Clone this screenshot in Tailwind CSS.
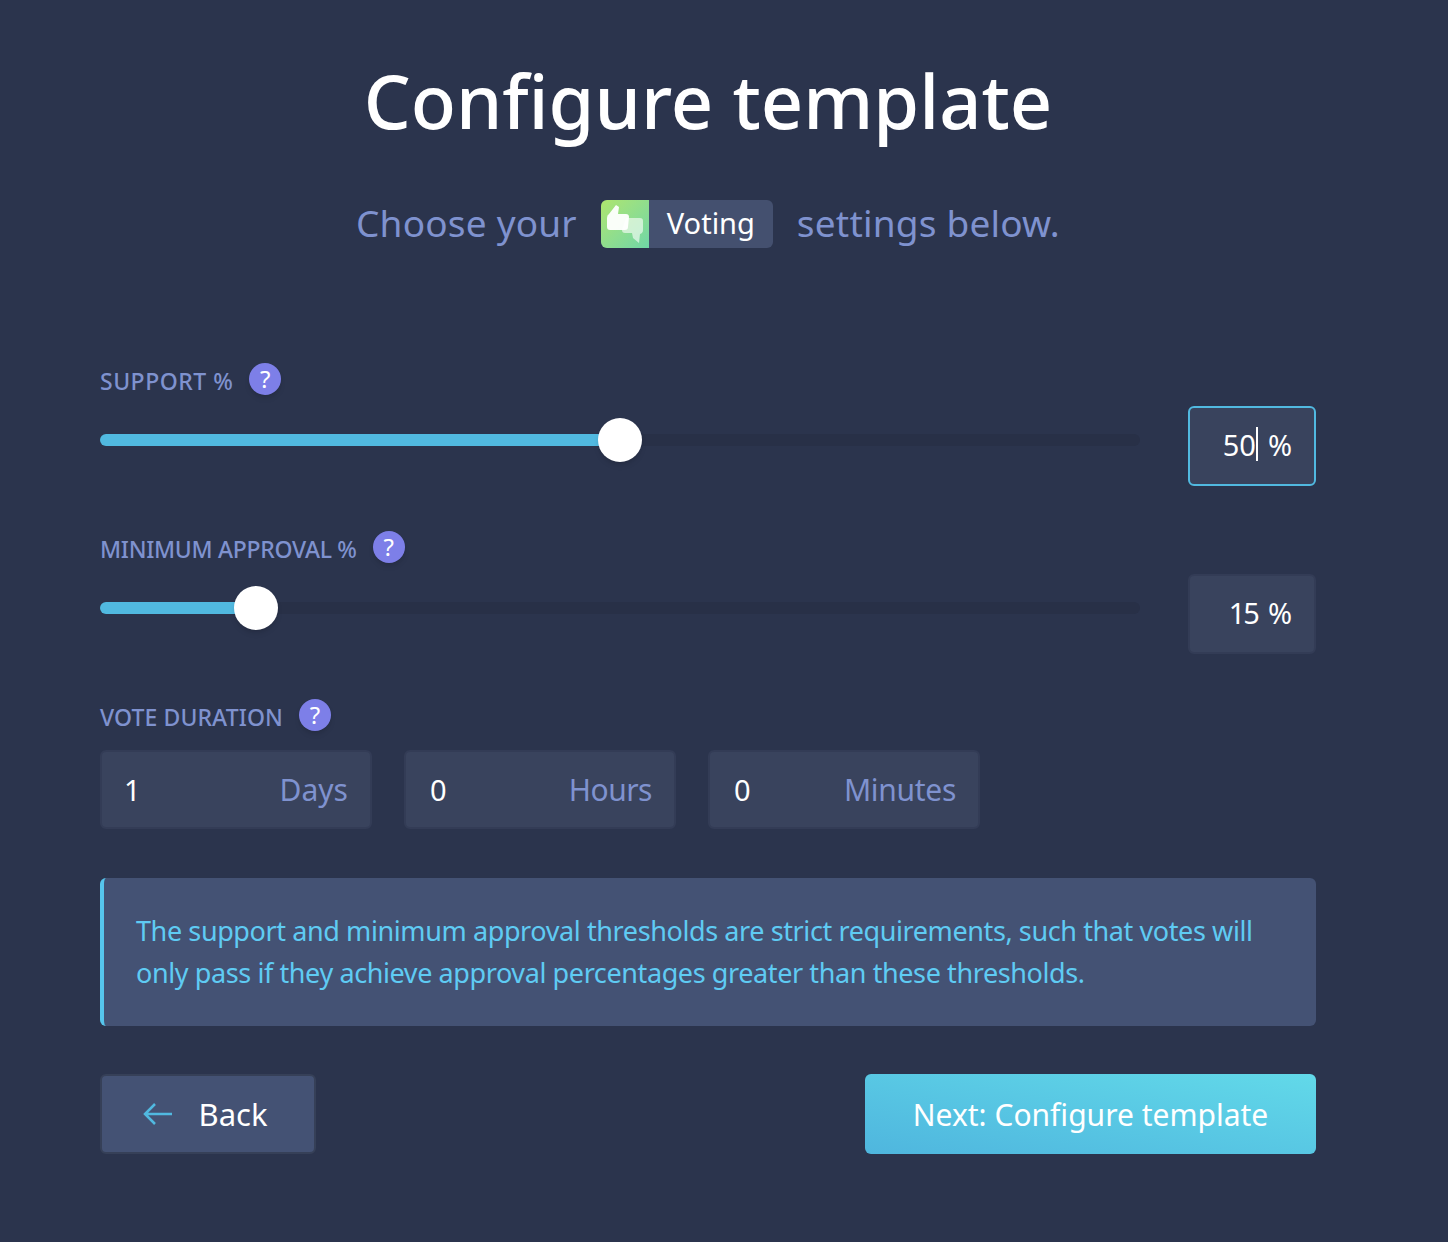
<!DOCTYPE html>
<html lang="en">
<head>
  <meta charset="UTF-8">
  <meta name="viewport" content="width=device-width, initial-scale=1.0">
  <title>Configure template</title>
  <script src="https://cdn.jsdelivr.net/npm/@tailwindcss/browser@4"></script>
</head>
<body class="bg-[#2b344d] font-['Noto_Sans',sans-serif] h-[1242px] overflow-hidden">
  <main class="w-[1216px] ml-[100px]">
    <!-- Header -->
    <h1 class="pt-[51px] h-[150px] text-center text-white text-[74px] leading-[100px] font-medium whitespace-nowrap">Configure template</h1>
    <div class="mt-[50px] h-[48px] flex items-center justify-center text-[#7f92cf] text-[37px] leading-[46px] tracking-[0.2px] whitespace-nowrap">
      <span class="mb-0.5">Choose your</span>
      <span class="mx-6 flex h-12 w-[172px] rounded-md overflow-hidden bg-[#44506f]">
        <span class="w-12 h-12 bg-gradient-to-br from-[#aee56d] to-[#6fd6a6]">
          <svg width="48" height="48" viewBox="0 0 48 48">
            <path d="M25 18h14q3 0 3 3v9q0 3-3 4l-1 9-6-5-1-5h-7q-3 0-3-3z" fill="#fff" fill-opacity=".6"/>
            <path d="M15 5l3 2-1 7h8q3 0 3 3l-1 10q0 3-3 3H9q-3 0-3-3V18q0-3 2-4z" fill="#fff" fill-opacity=".95"/>
          </svg>
        </span>
        <span class="flex-1 text-center text-white text-[29px] leading-[46px] tracking-normal">Voting</span>
      </span>
      <span class="mb-0.5">settings below.</span>
    </div>

    <!-- Support -->
    <section class="mt-[115px]">
      <div class="h-8 flex items-center gap-4 text-[#7f92cf] text-[23px] font-medium">
        <span class="mt-1 tracking-[0.5px]">SUPPORT %</span>
        <span class="w-8 h-8 rounded-full bg-[#7d7fe8] shadow-md text-white text-[24px] leading-8 text-center font-normal">?</span>
      </div>
      <div class="mt-[11px] flex gap-12">
        <div class="w-[1040px] h-11 mt-3 flex items-center">
          <div class="relative w-full h-3 rounded-md bg-[#283047]">
            <div class="h-3 w-[520px] rounded-md bg-[#51b9e0]"></div>
            <div class="absolute left-[498px] top-[-16px] w-11 h-11 rounded-full bg-white shadow-md"></div>
          </div>
        </div>
        <div class="w-32 h-20 pb-1 flex items-center justify-end pr-[22px] gap-[10px] rounded-md border-2 border-[#51b9e0] bg-[#39435d] text-white text-[29px] leading-none">
          <span class="flex items-center">50<span class="w-0.5 h-[34px] bg-white"></span></span>
          <span>%</span>
        </div>
      </div>
    </section>

    <!-- Minimum approval -->
    <section class="mt-[45px]">
      <div class="h-8 flex items-center gap-4 text-[#7f92cf] text-[23px] font-medium">
        <span class="mt-1 tracking-[-0.3px]">MINIMUM APPROVAL %</span>
        <span class="w-8 h-8 rounded-full bg-[#7d7fe8] shadow-md text-white text-[24px] leading-8 text-center font-normal">?</span>
      </div>
      <div class="mt-[11px] flex gap-12">
        <div class="w-[1040px] h-11 mt-3 flex items-center">
          <div class="relative w-full h-3 rounded-md bg-[#283047]">
            <div class="h-3 w-[156px] rounded-md bg-[#51b9e0]"></div>
            <div class="absolute left-[134px] top-[-16px] w-11 h-11 rounded-full bg-white shadow-md"></div>
          </div>
        </div>
        <div class="w-32 h-20 pb-1 flex items-center justify-end pr-[22px] gap-[10px] rounded-md border-2 border-[#333c56] bg-[#39435d] text-white text-[29px] leading-none">
          <span class="tracking-[-2px]">15</span>
          <span>%</span>
        </div>
      </div>
    </section>

    <!-- Vote duration -->
    <section class="mt-[45px]">
      <div class="h-8 flex items-center gap-4 text-[#7f92cf] text-[23px] font-medium">
        <span class="mt-1 tracking-[0.1px]">VOTE DURATION</span>
        <span class="w-8 h-8 rounded-full bg-[#7d7fe8] shadow-md text-white text-[24px] leading-8 text-center font-normal">?</span>
      </div>
      <div class="mt-[19px] flex gap-8">
        <div class="w-[272px] h-[79px] pl-6 pr-[22px] flex items-center justify-between rounded-md border-2 border-[#333c56] bg-[#39435d] text-[29px]">
          <span class="text-white -ml-0.5">1</span><span class="text-[#7f92cf] text-[30px]">Days</span>
        </div>
        <div class="w-[272px] h-[79px] pl-6 pr-[22px] flex items-center justify-between rounded-md border-2 border-[#333c56] bg-[#39435d] text-[29px]">
          <span class="text-white">0</span><span class="text-[#7f92cf] text-[30px] tracking-[-0.5px]">Hours</span>
        </div>
        <div class="w-[272px] h-[79px] pl-6 pr-[22px] flex items-center justify-between rounded-md border-2 border-[#333c56] bg-[#39435d] text-[29px]">
          <span class="text-white">0</span><span class="text-[#7f92cf] text-[30px] tracking-[-0.3px]">Minutes</span>
        </div>
      </div>
    </section>

    <!-- Info box -->
    <div class="mt-[49px] h-[148px] px-8 flex items-center rounded-md border-l-4 border-[#56c5ec] bg-[#445274] text-[#5fcbf3] text-[27px] leading-[42px] tracking-[-0.4px]">
      <p>The support and minimum approval thresholds are strict requirements, such that votes will only pass if they achieve approval percentages greater than these thresholds.</p>
    </div>

    <!-- Footer buttons -->
    <div class="mt-[48px] flex justify-between">
      <button class="w-[216px] h-20 pr-[6px] flex items-center justify-center gap-[26px] rounded-md border-2 border-[#364058] bg-[#445274] text-white text-[31px]">
        <svg width="30" height="24" viewBox="0 0 30 24" fill="none" stroke="#51b9e0" stroke-width="2.5"><path d="M29 12H2M12 2L2 12l10 10"/></svg>
        <span>Back</span>
      </button>
      <button class="w-[451px] h-20 rounded-md bg-gradient-to-tr from-[#4fb6de] to-[#62d9e9] text-white text-[30px]">Next: Configure template</button>
    </div>
  </main>
</body>
</html>
